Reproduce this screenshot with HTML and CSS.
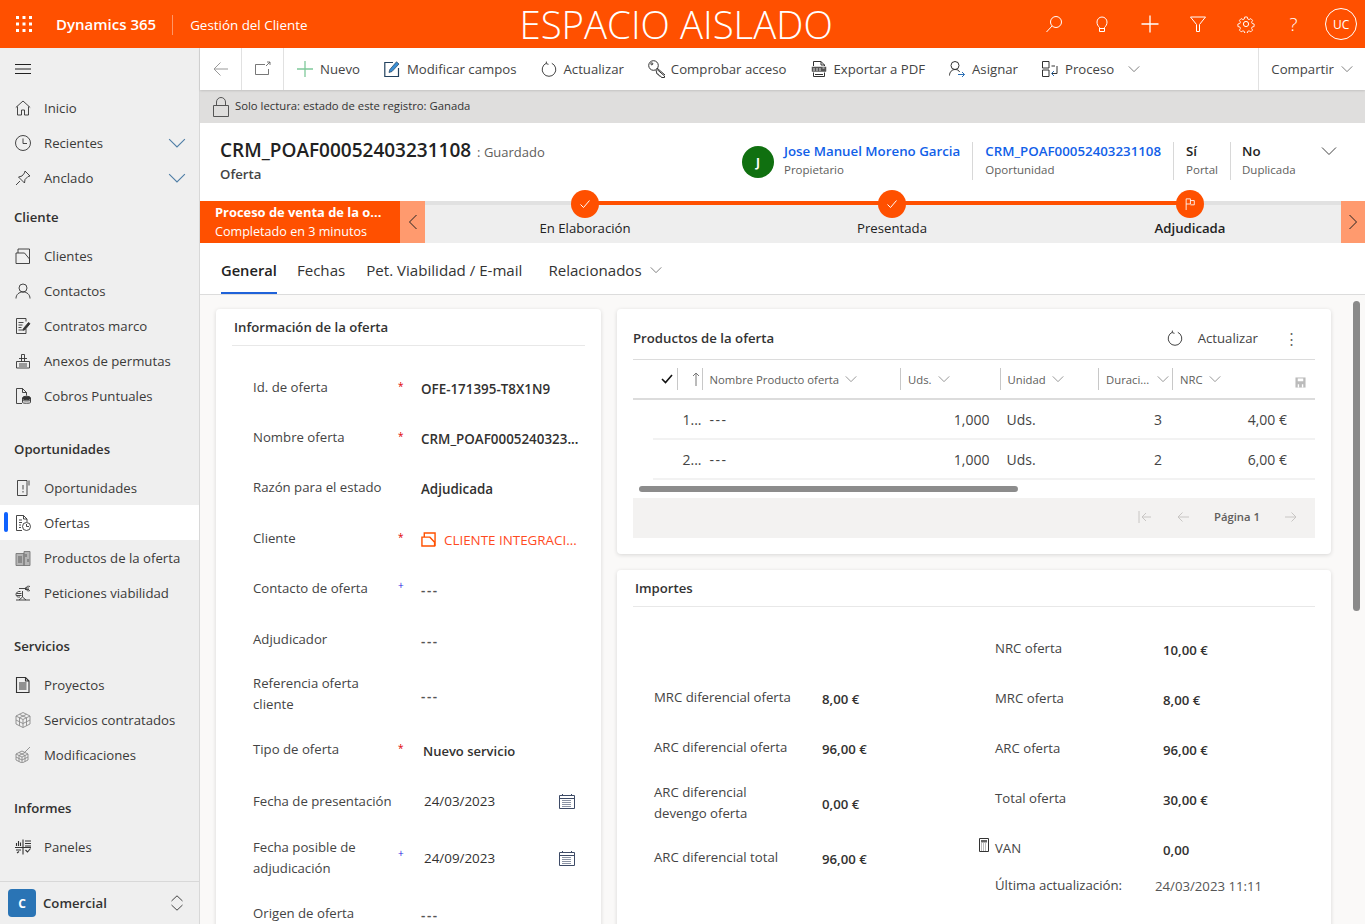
FILE: index.html
```html
<!DOCTYPE html>
<html lang="es">
<head>
    <meta charset="UTF-8">
    <title>Oferta - Dynamics 365</title>
    <link rel="stylesheet" href="styles.css">
</head>
<body>
    <svg class="sprite" width="0" height="0">
        <symbol id="chev" viewBox="0 0 16 16"><path d="M1 4.500l7 7 7-7" fill="none" stroke="currentColor"/></symbol>
        <symbol id="cal" viewBox="0 0 16 16"><path d="M.5 2.500h15v13H.5zM.5 5.500h15M3.500 1v2M12.500 1v2" fill="none" stroke="currentColor"/><path d="M3 7.500h10M3 9.500h10M3 11.500h10M3 13.500h10M4.500 7v7M6.500 7v7M8.500 7v7M10.500 7v7" fill="none" stroke="currentColor" stroke-width=".6" stroke-dasharray="1 1"/></symbol>
        <symbol id="refresh" viewBox="0 0 16 16"><path d="M10.800 2.300a6.800 6.800 0 1 1-5.600 0M5.400 .6l-.1 2.100 2.200 .6" fill="none" stroke="currentColor"/></symbol>
    </svg>

    <header class="topbar">
        <svg class="waffle" viewBox="0 0 16 16"><path d="M0 0h3v3H0zM6.500 0h3v3h-3zM13 0h3v3h-3zM0 6.500h3v3H0zM6.500 6.500h3v3h-3zM13 6.500h3v3h-3zM0 13h3v3H0zM6.500 13h3v3h-3zM13 13h3v3h-3z" fill="#fff"/></svg>
        <span class="brand">Dynamics 365</span>
        <span class="app-name">Gestión del Cliente</span>
        <span class="env-title">ESPACIO AISLADO</span>
        <div class="top-icons">
            <span class="top-btn"><svg viewBox="0 0 18 18"><circle cx="11" cy="7" r="5.500"/><path d="M7 11l-5.500 6"/></svg></span>
            <span class="top-btn"><svg viewBox="0 0 18 18"><path d="M6.500 12.500C5 11 4 9.500 4 7a5 5 0 0 1 10 0c0 2.500-1 4-2.500 5.500v4h-5zM6.500 13.500h5"/></svg></span>
            <span class="top-btn"><svg viewBox="0 0 18 18"><path d="M9 .5v17M.5 9h17" stroke-width="1.300"/></svg></span>
            <span class="top-btn"><svg viewBox="0 0 18 18"><path d="M1.500 2h15l-6 7.500v7h-3v-7z"/></svg></span>
            <span class="top-btn"><svg viewBox="0 0 18 18"><circle cx="9" cy="9" r="2.600"/><path d="M7.600 1.200h2.800l.5 2.200 1.500.7 2-1.100 1.900 2-1.100 1.900.6 1.500 2.200.6v2.800l-2.200.5-.6 1.500 1.100 2-1.900 1.900-2-1.100-1.500.6-.5 2.200H7.600" transform="translate(.9 .9) scale(.9)"/><path d="M7.600 1.200l-.5 2.200-1.500.7-2-1.100-1.900 2 1.100 1.900-.6 1.500-2.200.6v2.800l2.200.5.6 1.500-1.100 2 1.900 1.900 2-1.100 1.500.6.500 2.200" transform="translate(.9 .9) scale(.9)"/></svg></span>
            <span class="top-btn help">?</span>
            <span class="top-btn"><span class="avatar-uc">UC</span></span>
        </div>
    </header>

    <div class="app">
        <nav class="sidebar">
            <div class="nav-scroll">
                <div class="burger"><svg viewBox="0 0 16 12"><path d="M0 1.500h16M0 6h16M0 10.500h16" fill="none" stroke="#222"/></svg></div>
                <a class="nav-item"><svg class="nav-ic" viewBox="0 0 16 16"><path d="M.8 7.500L8 1l7.200 6.500M2.500 6.500v8.500h4v-5h3v5h4V6.500"/></svg>Inicio</a>
                <a class="nav-item"><svg class="nav-ic" viewBox="0 0 16 16"><circle cx="8" cy="8" r="7.500"/><path d="M8 3.500V8.500h4"/></svg>Recientes<svg class="nav-chev"><use href="#chev"/></svg></a>
                <a class="nav-item"><svg class="nav-ic" viewBox="0 0 16 16"><path d="M10 1l5 5-2 .5-3 3-.5 3.500-6-6L7 6l2.500-3zM5 11l-4 4"/></svg>Anclado<svg class="nav-chev"><use href="#chev"/></svg></a>

                <div class="nav-head">Cliente</div>
                <a class="nav-item"><svg class="nav-ic" viewBox="0 0 16 16"><path d="M1 5h8.500l5 6v4.500H1zM3 5V1h11.500v14"/></svg>Clientes</a>
                <a class="nav-item"><svg class="nav-ic" viewBox="0 0 16 16"><circle cx="8" cy="5" r="4"/><path d="M1 15.500c0-4 3-6.500 7-6.500s7 2.500 7 6.500"/></svg>Contactos</a>
                <a class="nav-item"><svg class="nav-ic" viewBox="0 0 16 16"><path d="M11 11v4.500H1.500V.5h9.500v3M3.500 4.500h5M3.500 7h4M3.500 9.500h3M3.500 12h5"/><path d="M8.500 10.500l5-6 1.500 1.200-5 6-2 .5z" fill="#333"/></svg>Contratos marco</a>
                <a class="nav-item"><svg class="nav-ic" viewBox="0 0 16 16"><path d="M1.500 8.500h13v6.500h-13zM6.500 8.500V1.500h3v7M4 5.500h8M4 11h8M4 13h8"/></svg>Anexos de permutas</a>
                <a class="nav-item"><svg class="nav-ic" viewBox="0 0 16 16"><path d="M7 15.500H1.500V.5h6l4 4v3M7.500.5v4h4"/><ellipse cx="11.500" cy="10" rx="4" ry="1.800" fill="#333"/><path d="M7.500 10v4.500c0 1 8 1 8 0V10M7.500 12.200c0 1 8 1 8 0"/></svg>Cobros Puntuales</a>

                <div class="nav-head nav-head-gap">Oportunidades</div>
                <a class="nav-item"><svg class="nav-ic" viewBox="0 0 16 16"><path d="M12 2.500v13H2.500V.5h9.500zM14 .5v5M8 5v4.500M8 11v1.500"/></svg>Oportunidades</a>
                <a class="nav-item selected"><svg class="nav-ic" viewBox="0 0 16 16"><path d="M7 15.500H1.500V.5h7l3.500 3.500v3M8.500.5V4H12M4 5h3M4 7.500h3M4 10h2M4 12.500h2"/><circle cx="11.500" cy="11.500" r="4"/><path d="M11.500 9v2.500h2.500"/></svg>Ofertas</a>
                <a class="nav-item"><svg class="nav-ic" viewBox="0 0 16 16"><path d="M1 3.500h8v12H1zM9 1.500h6v14H9z" fill="#b5b5b5" stroke="#777"/><path d="M4 6v7M6 6v7M11 4v3M13 9v3" stroke="#555"/></svg>Productos de la oferta</a>
                <a class="nav-item"><svg class="nav-ic" viewBox="0 0 16 16"><path d="M1 15h14M4 15l3.500-3 3.500 3M7.500 12V6M4 3.500h7M1.500 8.500h5M1.500 10.500h5M5.500 6.500C3 6 1 7.500 1 9.500s2 3 4 2.500M15 1.500c-2-.8-4 0-4 2s2 3 4 2M10 3h4M10 4.500h4"/></svg>Peticiones viabilidad</a>

                <div class="nav-head nav-head-gap">Servicios</div>
                <a class="nav-item"><svg class="nav-ic" viewBox="0 0 16 16"><path d="M14 15.500H1.500V.5h9l3.500 3.500zM10.500.5V4H14M4 6h7.500M4 8h7.500M4 10h7.500M4 12h7.500" stroke-width="1.100"/></svg>Proyectos</a>
                <a class="nav-item"><svg class="nav-ic faded" viewBox="0 0 16 16"><path d="M8 .5l7 3.500v8l-7 3.500-7-3.500V4zM1 4l7 3.500L15 4M8 7.500v8M1 8l7 3.500L15 8M4.500 2.300l7 3.500v8M11.500 2.300l-7 3.500v8"/></svg>Servicios contratados</a>
                <a class="nav-item"><svg class="nav-ic faded" viewBox="0 0 16 16"><path d="M7 4l6 3v6l-6 3-6-3V7zM1 7l6 3 6-3M7 10v6M1 10l6 3 6-3M4 5.500l6 3v6M10 5.500l-6 3v6M9 6l6-6" /></svg>Modificaciones</a>

                <div class="nav-head nav-head-gap">Informes</div>
                <a class="nav-item"><svg class="nav-ic" viewBox="0 0 16 16"><path d="M0 8.500h16M8 .5v15M1.500 7V4M3.500 7V2M5.500 7V3.500M10 2h6M10 4.500h6M10 7h6M1 11h5M10.500 11l2 2 3-3.500M2 14l2-1.500" stroke-width="1.100"/></svg>Paneles</a>
            </div>
            <div class="area-switch">
                <span class="area-chip">C</span>
                <span class="area-name">Comercial</span>
                <svg class="area-arrows" viewBox="0 0 12 16"><path d="M.5 6L6 .8 11.500 6M.5 10L6 15.200 11.500 10" fill="none" stroke="#444"/></svg>
            </div>
        </nav>

        <main class="main">
            <div class="cmdbar">
                <span class="cmd-nav"><svg class="cmd-ic gray" viewBox="0 0 16 16"><path d="M15 8H1M7.500 1.500L1 8l6.500 6.500"/></svg></span>
                <span class="cmd-nav"><svg class="cmd-ic thin" viewBox="0 0 16 16"><path d="M10 3.500H.5v10h13V8M12 1h3v3M15 1l-4 4"/></svg></span>
                <div class="cmd-list">
                    <span class="cmd"><svg class="cmd-ic" viewBox="0 0 16 16"><path d="M8 0v16M0 8h16" stroke="#7fc99a" stroke-width="1.300"/></svg>Nuevo</span>
                    <span class="cmd"><svg class="cmd-ic" viewBox="0 0 16 16"><path d="M9 1.500H.8v14h13.700V7" stroke="#22415e" stroke-width="1.200"/><path d="M5 11.500l.8-3L12.500.8l2.500 2.200-7 7.500z" fill="#3b8fd4" stroke="#22415e" stroke-width=".7"/></svg>Modificar campos</span>
                    <span class="cmd"><svg class="cmd-ic"><use href="#refresh"/></svg>Actualizar</span>
                    <span class="cmd"><svg class="cmd-ic wide" viewBox="0 0 18 18"><circle cx="5.500" cy="5.500" r="4.800"/><circle cx="3.800" cy="3.800" r="1"/><path d="M8.500 9l8 7v1.500h-3l-1-1.500-1.500-.2-.5-1.500-1.500-.3L8 10M9 8l8 7"/></svg>Comprobar acceso</span>
                    <span class="cmd"><svg class="cmd-ic" viewBox="0 0 16 16"><path d="M2.500 5V.5h7.500l3.500 3.500v1M10 .5V4h3.500M2.500 11.500v4h11v-4M4 13.500h8"/><rect x="1" y="6" width="14" height="4.500" fill="#555" stroke="#555" stroke-width=".5"/><path d="M3 7v3M6 7v3M9 7v3M11.500 7h2" stroke="#fff" stroke-width=".8"/></svg>Exportar a PDF</span>
                    <span class="cmd"><svg class="cmd-ic" viewBox="0 0 16 16"><circle cx="6" cy="4.500" r="4"/><path d="M.5 14.500c0-3.500 2.500-6 5.500-6s4 1 4.500 2.500"/><path d="M9 13.500h6.500M13 11l2.500 2.500L13 16" stroke="#2b6fb5"/></svg>Asignar</span>
                    <span class="cmd"><svg class="cmd-ic" viewBox="0 0 16 16"><path d="M.5 .5h6.500v6.500H.5zM.5 9h6.500v6.500H.5zM9.500 5h3.500M15 5v7.500h-5" /><path d="M12 10l-2.500 2.500L12 15" stroke="#2b6fb5"/></svg>Proceso<svg class="cmd-chev"><use href="#chev"/></svg></span>
                </div>
                <span class="cmd share">Compartir<svg class="cmd-chev share-chev"><use href="#chev"/></svg></span>
            </div>

            <div class="readonly-bar">
                <svg class="lock" viewBox="0 0 16 20"><path d="M.5 8.500h15v11H.5zM3.500 8.500V5a4.500 4.500 0 0 1 9 0v3.500" fill="none" stroke="#555"/></svg>
                Solo lectura: estado de este registro: Ganada
            </div>

            <section class="record-head">
                <div class="record-title">
                    <h1>CRM_POAF00052403231108 <small>: Guardado</small></h1>
                    <div class="record-type">Oferta</div>
                </div>
                <div class="head-fields">
                    <span class="owner-pic">J</span>
                    <div class="head-field"><a>Jose Manuel Moreno Garcia</a><span>Propietario</span></div>
                    <div class="head-field sep"><a>CRM_POAF00052403231108</a><span>Oportunidad</span></div>
                    <div class="head-field sep"><b>Sí</b><span>Portal</span></div>
                    <div class="head-field sep dup"><b>No</b><span>Duplicada</span></div>
                    <svg class="head-chev"><use href="#chev"/></svg>
                </div>
            </section>

            <section class="bpf">
                <div class="bpf-name">
                    <b>Proceso de venta de la o...</b>
                    <span>Completado en 3 minutos</span>
                </div>
                <div class="bpf-arrow"><svg viewBox="0 0 10 16"><path d="M8.500 1L1.500 8l7 7" fill="none" stroke="#222"/></svg></div>
                <div class="bpf-stages">
                    <div class="bpf-line"></div>
                    <div class="stage">
                        <span class="stage-dot"><svg viewBox="0 0 12 12"><path d="M1.500 6.500l3 3 6-7"/></svg></span>
                        <span>En Elaboración</span>
                    </div>
                    <div class="stage">
                        <span class="stage-dot"><svg viewBox="0 0 12 12"><path d="M1.500 6.500l3 3 6-7"/></svg></span>
                        <span>Presentada</span>
                    </div>
                    <div class="stage current">
                        <span class="stage-dot"><svg viewBox="0 0 12 14"><path d="M1.500 14V1h5v6h-5M6.500 3h4.500v5H6.500"/></svg></span>
                        <span>Adjudicada</span>
                    </div>
                </div>
                <div class="bpf-arrow right"><svg viewBox="0 0 10 16"><path d="M1.500 1l7 7-7 7" fill="none" stroke="#222"/></svg></div>
            </section>

            <div class="tabs">
                <span class="tab active">General</span>
                <span class="tab">Fechas</span>
                <span class="tab">Pet. Viabilidad / E-mail</span>
                <span class="tab related">Relacionados<svg class="tab-chev"><use href="#chev"/></svg></span>
            </div>

            <div class="content">
                <div class="scroll-thumb"></div>
                <section class="card card-info">
                    <h2 class="card-title">Información de la oferta</h2>
                    <div class="fields">
                        <div class="field"><label>Id. de oferta</label><i class="req">*</i><span class="val">OFE-171395-T8X1N9</span></div>
                        <div class="field"><label>Nombre oferta</label><i class="req">*</i><span class="val">CRM_POAF0005240323...</span></div>
                        <div class="field"><label>Razón para el estado</label><i></i><span class="val">Adjudicada</span></div>
                        <div class="field"><label>Cliente</label><i class="req">*</i><span class="val link"><svg class="cli-ic" viewBox="0 0 16 16"><path d="M1 5.500h8.500l5 5.500v4H1zM3.500 5.500V1H15v14" fill="none" stroke="#ff5000" stroke-width="1.500"/></svg>CLIENTE INTEGRACI...</span></div>
                        <div class="field"><label>Contacto de oferta</label><i class="rec">+</i><span class="val empty">---</span></div>
                        <div class="field"><label>Adjudicador</label><i></i><span class="val empty">---</span></div>
                        <div class="field tall"><label>Referencia oferta cliente</label><i></i><span class="val empty">---</span></div>
                        <div class="field"><label>Tipo de oferta</label><i class="req">*</i><span class="val semi">Nuevo servicio</span></div>
                        <div class="field date-row"><label>Fecha de presentación</label><i></i><span class="val date">24/03/2023<svg class="cal"><use href="#cal"/></svg></span></div>
                        <div class="field taller"><label>Fecha posible de adjudicación</label><i class="rec">+</i><span class="val date">24/09/2023<svg class="cal"><use href="#cal"/></svg></span></div>
                        <div class="field"><label>Origen de oferta</label><i></i><span class="val empty">---</span></div>
                    </div>
                </section>

                <div class="col-right">
                    <section class="card card-products">
                        <div class="products-top">
                            <h2>Productos de la oferta</h2>
                            <span class="grid-refresh"><svg><use href="#refresh"/></svg>Actualizar</span>
                            <span class="grid-more">⋮</span>
                        </div>
                        <div class="grid-row grid-head">
                            <span class="gh-check"><svg viewBox="0 0 12 10"><path d="M1 5l3.500 3.500L11 1" fill="none" stroke="#111" stroke-width="1.600"/></svg></span>
                            <span class="gh-sort"><svg viewBox="0 0 8 14"><path d="M4 14V1M1 4l3-3 3 3" fill="none" stroke="#777"/></svg></span>
                            <span>Nombre Producto oferta<svg class="gh-chev"><use href="#chev"/></svg></span>
                            <span>Uds.<svg class="gh-chev"><use href="#chev"/></svg></span>
                            <span>Unidad<svg class="gh-chev"><use href="#chev"/></svg></span>
                            <span class="gh-dur">Duraci...<svg class="gh-chev"><use href="#chev"/></svg></span>
                            <span class="gh-last">NRC<svg class="gh-chev"><use href="#chev"/></svg><svg class="gh-save" viewBox="0 0 12 12"><path d="M.5 .5h11v11H.5z" fill="#bbb"/><path d="M3 1.500h6v3H3zM3 8h1.500v3.500H3zM7.500 8H9v3.500H7.500z" fill="#fff"/></svg></span>
                        </div>
                        <div class="grid-row grid-line">
                            <span></span><span class="num">1...</span><span class="dash">---</span><span class="num">1,000</span><span>Uds.</span><span class="num">3</span><span class="num nrc">4,00 €</span>
                        </div>
                        <div class="grid-row grid-line">
                            <span></span><span class="num">2...</span><span class="dash">---</span><span class="num">1,000</span><span>Uds.</span><span class="num">2</span><span class="num nrc">6,00 €</span>
                        </div>
                        <div class="hscroll"></div>
                        <div class="pager">
                            <svg class="pg-ic" viewBox="0 0 14 14"><path d="M1 1v12M13 7H4M8 3L4 7l4 4"/></svg>
                            <svg class="pg-ic" viewBox="0 0 14 14"><path d="M13 7H2M6.500 2.500L2 7l4.500 4.500"/></svg>
                            <span>Página 1</span>
                            <svg class="pg-ic" viewBox="0 0 14 14"><path d="M1 7h11M7.500 2.500L12 7l-4.500 4.500"/></svg>
                        </div>
                    </section>

                    <section class="card card-amounts">
                        <h2 class="card-title">Importes</h2>
                        <div class="amounts">
                            <div class="amount-col col-left">
                                <div class="amount"></div>
                                <div class="amount"><label>MRC diferencial oferta</label><b>8,00 €</b></div>
                                <div class="amount"><label>ARC diferencial oferta</label><b>96,00 €</b></div>
                                <div class="amount tall"><label>ARC diferencial devengo oferta</label><b>0,00 €</b></div>
                                <div class="amount"><label>ARC diferencial total</label><b>96,00 €</b></div>
                            </div>
                            <div class="amount-col">
                                <div class="amount"><label>NRC oferta</label><b>10,00 €</b></div>
                                <div class="amount"><label>MRC oferta</label><b>8,00 €</b></div>
                                <div class="amount"><label>ARC oferta</label><b>96,00 €</b></div>
                                <div class="amount"><label>Total oferta</label><b>30,00 €</b></div>
                                <div class="amount"><label><svg class="calc" viewBox="0 0 10 14"><path d="M.5 .5h9v13h-9z" fill="#fff" stroke="#333"/><path d="M2 2h6v2.500H2z" fill="#666"/><path d="M2 6h6M2 8h6M2 10h6M2 12h6" stroke="#777" stroke-dasharray="1 1"/></svg>VAN</label><b>0,00</b></div>
                                <div class="amount updated"><label>Última actualización:</label><span>24/03/2023 11:11</span></div>
                            </div>
                        </div>
                    </section>
                </div>
            </div>
        </main>
    </div>
</body>
</html>
```

FILE: styles.css
```css
* {
    box-sizing: border-box;
}
body {
    margin: 0;
    height: 924px;
    overflow: hidden;
    font-family: "Open Sans", "Noto Sans", sans-serif;
    font-size: 13.2px;
    color: #333;
    background-color: #fff;
}
svg {
    flex: none;
}
.sprite {
    position: absolute;
}

/* Top bar */
.topbar {
    display: flex;
    align-items: center;
    height: 48px;
    background-color: #ff5000;
    color: #fff;
}
.waffle {
    width: 16px;
    height: 16px;
    margin-left: 16px;
}
.brand {
    margin-left: 24px;
    padding-right: 16px;
    font-size: 15px;
    font-weight: 600;
}
.app-name {
    margin-top: 1px;
    padding-left: 17px;
    border-left: 1px solid rgba(255, 255, 255, 0.4);
    font-size: 13.4px;
    line-height: 20px;
}
.env-title {
    margin-left: 212px;
    font-size: 38.4px;
    font-weight: 300;
    line-height: 46px;
    white-space: nowrap;
}
.top-icons {
    display: flex;
    margin-left: auto;
}
.top-btn {
    display: flex;
    align-items: center;
    justify-content: center;
    width: 48px;
    height: 48px;
    margin-right: -0.2px;
}
.top-btn svg {
    width: 18px;
    height: 18px;
    fill: none;
    stroke: #fff;
}
.top-btn.help {
    font-size: 19px;
    font-weight: 300;
}
.avatar-uc {
    display: flex;
    align-items: center;
    justify-content: center;
    width: 32px;
    height: 32px;
    border: 1px solid #fff;
    border-radius: 50%;
    font-size: 12px;
}

.app {
    display: flex;
    height: 876px;
}

/* Sidebar */
.sidebar {
    display: flex;
    flex-direction: column;
    flex: none;
    width: 200px;
    background-color: #efefef;
    border-right: 1px solid #d8d8d8;
}
.nav-scroll {
    flex: 1;
    overflow: hidden;
}
.burger {
    display: flex;
    align-items: center;
    height: 42px;
    padding-left: 15px;
}
.burger svg {
    width: 16px;
    height: 12px;
}
.nav-item {
    position: relative;
    display: flex;
    align-items: center;
    height: 35px;
    padding-left: 15px;
    color: #3b3a39;
}
.nav-ic {
    width: 16px;
    height: 16px;
    margin-right: 13px;
    fill: none;
    stroke: #333;
    stroke-width: 0.9;
}
.nav-ic.faded {
    stroke: #8a8a8a;
}
.nav-chev {
    width: 18px;
    height: 18px;
    margin-left: auto;
    margin-right: 13px;
    color: #4f7ea6;
}
.nav-item.selected {
    background-color: #fff;
}
.nav-item.selected::before {
    content: "";
    position: absolute;
    left: 4px;
    top: 7px;
    width: 4px;
    height: 20px;
    border-radius: 2px;
    background-color: #0f62fe;
}
.nav-head {
    display: flex;
    align-items: center;
    height: 43px;
    padding-left: 14px;
    font-weight: 600;
    color: #323130;
}
.nav-head-gap {
    margin-top: 14px;
}
.area-switch {
    display: flex;
    align-items: center;
    height: 43px;
    padding-left: 8px;
    border-top: 1px solid #d8d8d8;
}
.area-chip {
    display: flex;
    align-items: center;
    justify-content: center;
    width: 28px;
    height: 28px;
    border-radius: 4px;
    background-color: #2a74b5;
    color: #fff;
    font-size: 12px;
    font-weight: 700;
}
.area-name {
    margin-left: 7px;
    font-weight: 600;
}
.area-arrows {
    width: 12px;
    height: 16px;
    margin-left: auto;
    margin-right: 16px;
}

/* Main column */
.main {
    display: flex;
    flex-direction: column;
    flex: 1;
    min-width: 0;
}
.cmdbar {
    display: flex;
    align-items: center;
    height: 42px;
    background-color: #fff;
    color: #444;
    font-size: 13.2px;
    box-shadow: 0 1px 2px rgba(0, 0, 0, 0.12);
    position: relative;
}
.cmd-nav {
    display: flex;
    align-items: center;
    justify-content: center;
    height: 42px;
    width: 42px;
    border-right: 1px solid #e1e1e1;
}
.cmd-list {
    display: flex;
    align-items: center;
    gap: 24px;
    margin-left: 13px;
}
.cmd {
    display: flex;
    align-items: center;
    gap: 7px;
    white-space: nowrap;
}
.cmd-ic {
    width: 16px;
    height: 16px;
    fill: none;
    stroke: #333;
    stroke-width: 1;
}
.cmd-ic.gray {
    stroke: #999;
}
.cmd-ic.thin {
    stroke: #555;
    stroke-width: 0.8;
}
.cmd-ic.wide {
    width: 18px;
    height: 18px;
    margin-right: -2px;
}
.cmd-chev {
    width: 12px;
    height: 12px;
    margin-left: 7px;
    color: #555;
}
.share {
    height: 42px;
    margin-left: auto;
    padding: 0 12px;
    border-left: 1px solid #e1e1e1;
}
.share-chev {
    margin-left: 0;
}
.readonly-bar {
    display: flex;
    align-items: center;
    flex: none;
    height: 33px;
    padding: 0 0 2px 13px;
    background-color: #dfdedd;
    font-size: 11.3px;
    color: #333;
}
.lock {
    width: 16px;
    height: 20px;
    margin: 2px 6px 0 0;
}

/* Record header */
.record-head {
    display: flex;
    flex: none;
    height: 78px;
    padding: 0 28px 0 20px;
}
.record-title h1 {
    margin: 12px 0 0;
    font-size: 19px;
    font-weight: 600;
    line-height: 30px;
    color: #222;
}
.record-title small {
    margin-left: 1px;
    font-size: 13px;
    font-weight: 400;
    color: #605e5c;
}
.record-type {
    margin-top: -2px;
    font-weight: 600;
    color: #444;
}
.head-fields {
    display: flex;
    align-items: flex-start;
    margin-left: auto;
    padding-top: 19px;
}
.owner-pic {
    display: flex;
    align-items: center;
    justify-content: center;
    width: 32px;
    height: 32px;
    margin: 4px 10px 0 0;
    border-radius: 50%;
    background-color: #107010;
    color: #fff;
    font-size: 12px;
    font-weight: 700;
}
.head-field {
    display: flex;
    flex-direction: column;
    height: 38px;
    padding-right: 12px;
    line-height: 18px;
    font-size: 13.3px;
    white-space: nowrap;
}
.head-field.sep {
    padding-left: 12px;
    border-left: 1px solid #d8d8d8;
}
.head-field a {
    color: #1160e8;
    font-weight: 600;
}
.head-field b {
    font-weight: 600;
    color: #222;
}
.head-field span {
    font-size: 11.5px;
    line-height: 20px;
    color: #605e5c;
}
.head-field.dup {
    width: 91px;
    padding-left: 11px;
}
.head-chev {
    width: 16px;
    height: 16px;
    margin-top: 1px;
    color: #444;
}

/* Business process flow */
.bpf {
    display: flex;
    flex: none;
    height: 42px;
}
.bpf-name {
    display: flex;
    flex-direction: column;
    justify-content: center;
    width: 200px;
    padding-left: 15px;
    background-color: #ff5000;
    color: #fff;
    line-height: 19px;
    white-space: nowrap;
}
.bpf-name b {
    font-weight: 700;
    font-size: 12.9px;
}
.bpf-name span {
    font-size: 12.6px;
}
.bpf-arrow {
    display: flex;
    align-items: center;
    justify-content: center;
    width: 25px;
    background-color: #ff9a6e;
}
.bpf-arrow.right {
    width: 24px;
}
.bpf-arrow svg {
    width: 10px;
    height: 16px;
}
.bpf-stages {
    position: relative;
    display: grid;
    flex: 1;
    grid-template-columns: 320px 294px 302px;
    background-color: #eee;
    border-top: 4px solid #e1e1e1;
}
.bpf-line {
    position: absolute;
    left: 160px;
    top: -4px;
    width: 605px;
    height: 4px;
    background-color: #ff5000;
}
.stage {
    position: relative;
    display: flex;
    flex-direction: column;
    align-items: center;
    gap: 1px;
    margin-top: -15px;
    color: #222;
}
.stage.current {
    font-weight: 600;
}
.stage-dot {
    display: flex;
    align-items: center;
    justify-content: center;
    width: 28px;
    height: 28px;
    border-radius: 50%;
    background-color: #ff5000;
}
.stage-dot svg {
    width: 12px;
    height: 12px;
    fill: none;
    stroke: #fff;
}

/* Tabs */
.tabs {
    display: flex;
    flex: none;
    height: 52px;
    padding-left: 21px;
    border-bottom: 1px solid #dcdcdc;
    font-size: 15.1px;
}
.tab {
    display: flex;
    align-items: center;
    height: 51px;
    margin-right: 21px;
    padding-top: 3px;
    color: #333;
}
.tab.active {
    margin-right: 20px;
    font-size: 14.7px;
    font-weight: 600;
    color: #222;
    border-bottom: 2px solid #1f62d9;
    padding-top: 5px;
}
.tab.related {
    margin-left: 5px;
}
.tab-chev {
    width: 12px;
    height: 12px;
    margin-left: 8px;
    color: #555;
}

/* Form area */
.content {
    position: relative;
    display: flex;
    flex: 1;
    align-items: flex-start;
    gap: 16px;
    padding: 14px 0 0 16px;
    overflow: hidden;
    background-color: #faf9f8;
}
.scroll-thumb {
    position: absolute;
    right: 5px;
    top: 6px;
    width: 7px;
    height: 310px;
    border-radius: 4px;
    background-color: #8a8a8a;
}
.card {
    background-color: #fff;
    border-radius: 4px;
    box-shadow: 0 1px 4px rgba(0, 0, 0, 0.14);
}
.card-title {
    margin: 0;
    height: 37px;
    font-size: 13.2px;
    font-weight: 600;
    line-height: 36px;
    color: #333;
    border-bottom: 1px solid #e8e8e8;
}
.card-info {
    flex: none;
    width: 385px;
    height: 700px;
    padding: 0 16px;
}
.card-info .card-title {
    padding-left: 2px;
}
.fields {
    padding-top: 17.5px;
}
.field {
    display: grid;
    grid-template-columns: 145px 23px 1fr;
    align-items: center;
    height: 50.4px;
    padding-left: 21px;
}
.field.tall {
    height: 60px;
}
.field.taller {
    height: 63px;
}
.field label {
    margin-top: -3px;
    line-height: 21px;
    color: #444;
}
.field.date-row label,
.field.taller label {
    margin-top: 0;
}
.field i {
    margin-top: -6px;
    font-style: normal;
    font-size: 10px;
    line-height: 12px;
}
.field .req {
    color: #e00000;
}
.field .rec {
    color: #1a1ae0;
    margin-top: -10px;
}
.val {
    display: flex;
    align-items: center;
    font-size: 13.4px;
    font-weight: 600;
    color: #323130;
    white-space: nowrap;
}
.val.empty {
    letter-spacing: 1.6px;
    color: #555;
}
.val.link {
    color: #ff4b1f;
    font-weight: 500;
}
.val.semi {
    padding-left: 2px;
    font-size: 13px;
}
.val.date {
    padding-left: 3px;
    font-weight: 400;
}
.cli-ic {
    width: 15px;
    height: 15px;
    margin-right: 8px;
}
.cal {
    width: 16px;
    height: 16px;
    margin-left: auto;
    margin-right: 10px;
    color: #3d4a66;
}

/* Right column */
.col-right {
    display: flex;
    flex-direction: column;
    gap: 16px;
    width: 714px;
}
.card-products {
    height: 245px;
    padding: 0 16px;
}
.products-top {
    display: flex;
    align-items: center;
    height: 51px;
    padding-top: 8px;
    border-bottom: 1px solid #dcdcdc;
}
.products-top h2 {
    margin: -1px 0 0;
    font-size: 13.2px;
    font-weight: 600;
}
.grid-refresh {
    display: flex;
    align-items: center;
    gap: 15px;
    margin-left: auto;
    color: #444;
}
.grid-refresh svg {
    width: 16px;
    height: 16px;
}
.grid-more {
    width: 57px;
    padding-right: 16px;
    text-align: right;
    font-size: 15px;
    color: #666;
}
.grid-row {
    display: grid;
    grid-template-columns: 44px 24.5px 198.5px 99.5px 98.5px 74px 1fr;
    align-items: center;
}
.grid-head {
    position: relative;
    height: 40px;
    border-bottom: 2px solid #dcdcdc;
    font-size: 11.3px;
    color: #605e5c;
}
.grid-head > span {
    display: flex;
    align-items: center;
    height: 22px;
    padding-left: 7px;
    border-left: 1px solid #c8c8c8;
    white-space: nowrap;
}
.grid-head .gh-check {
    justify-content: flex-end;
    padding-right: 4px;
    border-left: 0;
}
.grid-head .gh-check svg {
    width: 12px;
    height: 10px;
}
.grid-head .gh-sort {
    padding-left: 14px;
}
.gh-sort svg {
    width: 8px;
    height: 14px;
}
.gh-chev {
    width: 12px;
    height: 12px;
    margin-left: 6px;
    color: #777;
}
.gh-dur .gh-chev {
    margin-left: auto;
    margin-right: 3px;
}
.gh-save {
    width: 11px;
    height: 11px;
    margin-left: auto;
    margin-right: 9px;
    margin-top: 7px;
}
.grid-line {
    height: 40px;
    padding-bottom: 2px;
    position: relative;
    color: #444;
    font-size: 14px;
}
.grid-line::after {
    content: "";
    position: absolute;
    left: 20px;
    right: 0;
    bottom: 0;
    height: 2px;
    background-color: #f2f2f2;
}
.grid-line > span {
    padding-left: 7px;
    white-space: nowrap;
}
.grid-line .dash {
    padding-left: 8px;
    letter-spacing: 1.5px;
}
.grid-line .num {
    padding: 0 10px 0 0;
    text-align: right;
}
.grid-line > span:nth-child(2) {
    padding-right: 0;
}
.grid-line .nrc {
    padding-right: 28px;
}
.hscroll {
    width: 379px;
    height: 6px;
    margin: 6px 0 6px 6px;
    border-radius: 3px;
    background-color: #8c8c8c;
}
.pager {
    display: flex;
    align-items: center;
    justify-content: flex-end;
    gap: 24px;
    height: 40px;
    padding: 0 17px 3px 0;
    background-color: #f3f2f1;
    font-size: 11.3px;
    font-weight: 600;
    color: #605e5c;
}
.pg-ic {
    width: 14px;
    height: 14px;
    fill: none;
    stroke: #c8c6c4;
}
.card-amounts {
    height: 400px;
    padding: 0 16px;
}
.card-amounts .card-title {
    padding-left: 2px;
}
.amounts {
    display: flex;
    padding-top: 18px;
}
.amount-col {
    width: 341px;
    padding-left: 21px;
}
.col-left {
    margin-top: -1px;
}
.amount {
    display: grid;
    grid-template-columns: 168px 1fr;
    align-items: center;
    height: 50px;
}
.amount.tall {
    height: 60px;
}
.amount.tall label {
    margin-top: -2px;
}
.amount label {
    position: relative;
    margin-top: -4px;
    padding-right: 24px;
    line-height: 21px;
    color: #444;
}
.amount b {
    font-weight: 600;
    color: #323130;
}
.amount.updated {
    height: 16px;
    grid-template-columns: 160px 1fr;
}
.amount.updated label {
    margin-top: 0;
    white-space: nowrap;
}
.amount.updated span {
    color: #555;
}
.calc {
    position: absolute;
    left: -16px;
    top: 0;
    width: 10px;
    height: 14px;
}
```
